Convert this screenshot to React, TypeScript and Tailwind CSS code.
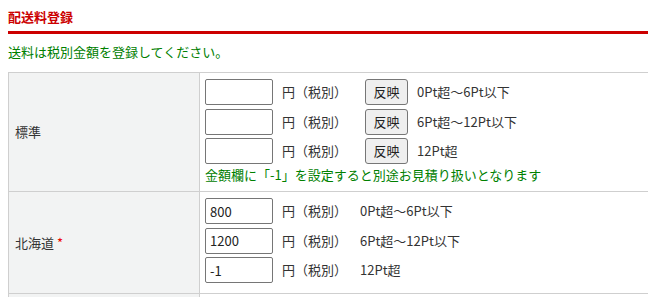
import React from 'react';

const font = { fontFamily: '"Noto Sans CJK JP", "Liberation Sans", sans-serif' };

interface Tier {
  value: string;
  range: string;
}

const standardTiers: Tier[] = [
  { value: '', range: '0Pt超～6Pt以下' },
  { value: '', range: '6Pt超～12Pt以下' },
  { value: '', range: '12Pt超' },
];

const hokkaidoTiers: Tier[] = [
  { value: '800', range: '0Pt超～6Pt以下' },
  { value: '1200', range: '6Pt超～12Pt以下' },
  { value: '-1', range: '12Pt超' },
];

function PriceRow({ tier, withButton }: { tier: Tier; withButton: boolean }) {
  return (
    <div className="flex items-center h-[26px]">
      <input
        type="text"
        defaultValue={tier.value}
        className="w-[68px] h-[26px] px-[4px] border border-[#767676] rounded-[2px] bg-white text-[13px] text-[#222] outline-none"
        style={font}
      />
      <span className="ml-[9px] w-[65px] text-[13px] text-[#333]">円（税別）</span>
      {withButton ? (
        <>
          <button
            type="button"
            className="ml-[18px] w-[43px] h-[26px] border border-[#767676] rounded-[3px] bg-[#efefef] text-[13px] text-[#222]"
          >
            反映
          </button>
          <span className="ml-[9px] text-[13px] text-[#333]">{tier.range}</span>
        </>
      ) : (
        <span className="ml-[13px] text-[13px] text-[#333]">{tier.range}</span>
      )}
    </div>
  );
}

export default function App() {
  return (
    <div className="pl-2 pt-[8px] bg-white min-h-screen overflow-hidden" style={font}>
      <h1 className="text-[13px] leading-[18px] font-bold text-[#cc0000]">配送料登録</h1>
      <div className="mt-[5px] h-[3px] bg-[#cc0000]"></div>
      <p className="mt-[9px] text-[13px] leading-[18px] text-[#008000]">送料は税別金額を登録してください。</p>

      <table className="mt-[11px] w-full border-collapse">
        <tbody>
          <tr className="border-t border-b border-[#cfcfcf]">
            <th className="w-[191px] border-l border-r border-[#cfcfcf] bg-[#f2f3f3] pl-[6px] text-left align-middle font-normal text-[13px] text-[#333]">
              標準
            </th>
            <td className="pl-[5px] pt-[6px] pb-[7px] align-top">
              <div className="flex flex-col gap-[3.5px]">
                {standardTiers.map((t, i) => (
                  <PriceRow key={i} tier={t} withButton />
                ))}
              </div>
              <p className="mt-[2px] text-[13px] leading-[18px] text-[#008000]">
                金額欄に「-1」を設定すると別途お見積り扱いとなります
              </p>
            </td>
          </tr>
          <tr className="border-b border-[#cfcfcf]">
            <th className="border-l border-r border-[#cfcfcf] bg-[#f2f3f3] pl-[6px] text-left align-middle font-normal text-[13px] text-[#333]">
              北海道 <span className="text-[#ee0000]">*</span>
            </th>
            <td className="pl-[5px] pt-[6px] pb-[10px] align-top">
              <div className="flex flex-col gap-[3.5px]">
                {hokkaidoTiers.map((t, i) => (
                  <PriceRow key={i} tier={t} withButton={false} />
                ))}
              </div>
            </td>
          </tr>
          <tr>
            <th className="h-[20px] border-l border-r border-[#cfcfcf] bg-[#f2f3f3]"></th>
            <td></td>
          </tr>
        </tbody>
      </table>
    </div>
  );
}
